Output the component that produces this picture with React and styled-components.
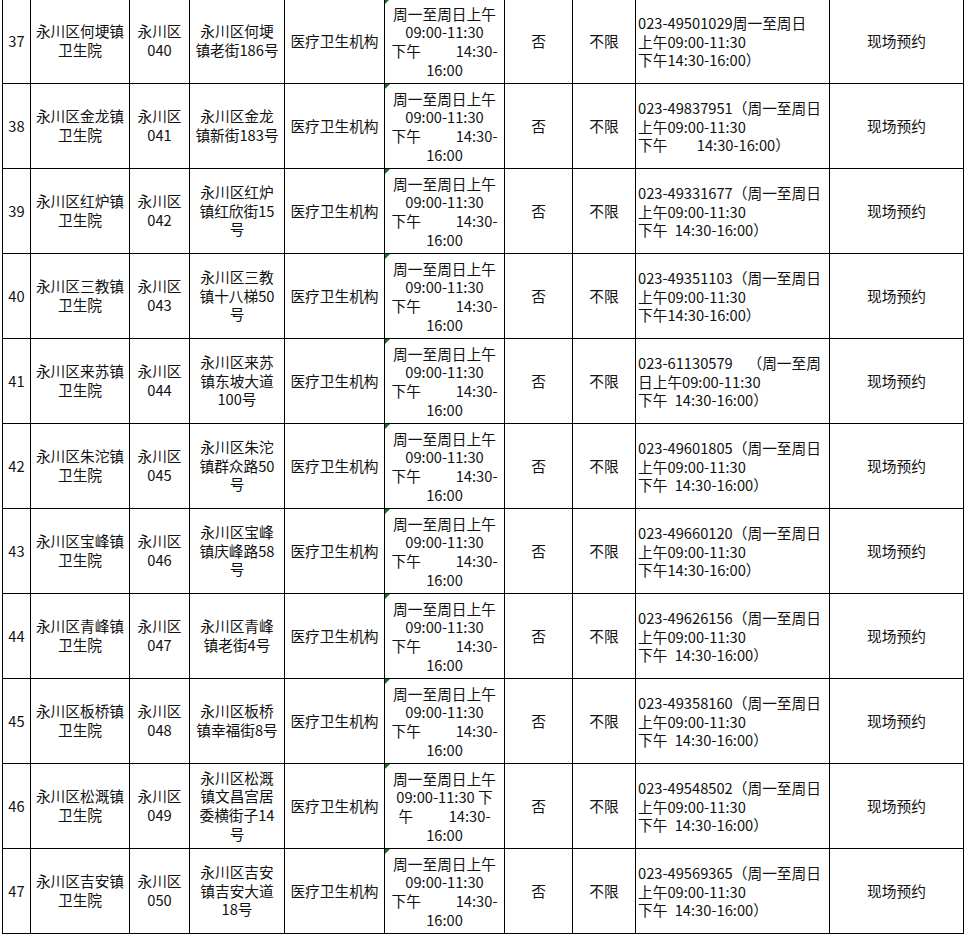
import React from 'react'
import styled, { createGlobalStyle } from 'styled-components';

const GlobalStyle = createGlobalStyle`
  html, body {
    margin: 0;
    padding: 0;
    background: #fff;
  }
  body {
    font-family: "Noto Sans CJK SC", "Liberation Sans", sans-serif;
    color: #111;
  }
`;

const Sheet = styled.div`
  display: grid;
  grid-template-columns: 28px 99px 60px 95px 100px 120px 68px 63px 194px 134px;
  grid-auto-rows: 85px;
  width: fit-content;
  margin: -2px 0 0 2px;
  border-left: 1px solid #000;
  border-top: 1px solid #000;
`;

const Cell = styled.div`
  display: flex;
  flex-direction: column;
  justify-content: center;
  align-items: ${(p) => (p.$left ? 'flex-start' : 'center')};
  text-align: ${(p) => (p.$left ? 'left' : 'center')};
  padding: ${(p) => (p.$left ? '2px 0 0 2px' : '0')};
  border-right: 1px solid #000;
  border-bottom: 1px solid #000;
  font-size: 14.7px;
  line-height: 18.6px;
  white-space: pre;
  overflow: hidden;
`;

const HoursCell = styled(Cell)`
  position: relative;
  padding-top: 2px;

  &::before {
    content: '';
    position: absolute;
    top: 0;
    left: 0;
    border-top: 5px solid #1e6b2c;
    border-right: 5px solid transparent;
  }
`;

const Line = styled.span`
  display: block;
`;

const SplitLine = styled.span`
  display: flex;
  justify-content: space-between;
  width: ${(p) => p.$width}px;
`;

const sp = '\u2002';

const defaultHours = {
  lines: ['周一至周日上午', '09:00-11:30', ['下午', '14:30-'], '16:00'],
  split: 106,
};

const rows = [
  { no: 37, name: '永川区何埂镇\n卫生院', code: '040', addr: '永川区何埂\n镇老街186号',
    phone: '023-49501029周一至周日\n上午09:00-11:30\n下午14:30-16:00）' },
  { no: 38, name: '永川区金龙镇\n卫生院', code: '041', addr: '永川区金龙\n镇新街183号',
    phone: `023-49837951（周一至周日\n上午09:00-11:30\n下午${sp.repeat(4)}14:30-16:00）` },
  { no: 39, name: '永川区红炉镇\n卫生院', code: '042', addr: '永川区红炉\n镇红欣街15\n号',
    phone: `023-49331677（周一至周日\n上午09:00-11:30\n下午${sp}14:30-16:00）` },
  { no: 40, name: '永川区三教镇\n卫生院', code: '043', addr: '永川区三教\n镇十八梯50\n号',
    phone: '023-49351103（周一至周日\n上午09:00-11:30\n下午14:30-16:00）' },
  { no: 41, name: '永川区来苏镇\n卫生院', code: '044', addr: '永川区来苏\n镇东坡大道\n100号',
    phone: `023-61130579${sp}${sp}（周一至周\n日上午09:00-11:30\n下午${sp}14:30-16:00）` },
  { no: 42, name: '永川区朱沱镇\n卫生院', code: '045', addr: '永川区朱沱\n镇群众路50\n号',
    phone: `023-49601805（周一至周日\n上午09:00-11:30\n下午${sp}14:30-16:00）` },
  { no: 43, name: '永川区宝峰镇\n卫生院', code: '046', addr: '永川区宝峰\n镇庆峰路58\n号',
    phone: '023-49660120（周一至周日\n上午09:00-11:30\n下午14:30-16:00）' },
  { no: 44, name: '永川区青峰镇\n卫生院', code: '047', addr: '永川区青峰\n镇老街4号',
    phone: `023-49626156（周一至周日\n上午09:00-11:30\n下午${sp}14:30-16:00）` },
  { no: 45, name: '永川区板桥镇\n卫生院', code: '048', addr: '永川区板桥\n镇幸福街8号',
    phone: `023-49358160（周一至周日\n上午09:00-11:30\n下午${sp}14:30-16:00）` },
  { no: 46, name: '永川区松溉镇\n卫生院', code: '049', addr: '永川区松溉\n镇文昌宫居\n委横街子14\n号',
    hours: { lines: ['周一至周日上午', '09:00-11:30 下', ['午', '14:30-'], '16:00'], split: 92 },
    phone: `023-49548502（周一至周日\n上午09:00-11:30\n下午${sp}14:30-16:00）` },
  { no: 47, name: '永川区吉安镇\n卫生院', code: '050', addr: '永川区吉安\n镇吉安大道\n18号',
    phone: `023-49569365（周一至周日\n上午09:00-11:30\n下午${sp}14:30-16:00）` },
];

function Hours({ data }) {
  return (
    <HoursCell>
      {data.lines.map((ln, i) =>
        Array.isArray(ln) ? (
          <SplitLine key={i} $width={data.split}>
            <span>{ln[0]}</span>
            <span>{ln[1]}</span>
          </SplitLine>
        ) : (
          <Line key={i}>{ln}</Line>
        )
      )}
    </HoursCell>
  );
}

function App() {
  return (
    <>
      <GlobalStyle />
      <Sheet>
        {rows.map((r) => (
          <React.Fragment key={r.no}>
            <Cell>{r.no}</Cell>
            <Cell>{r.name}</Cell>
            <Cell>{`永川区\n${r.code}`}</Cell>
            <Cell>{r.addr}</Cell>
            <Cell>医疗卫生机构</Cell>
            <Hours data={r.hours || defaultHours} />
            <Cell>否</Cell>
            <Cell>不限</Cell>
            <Cell $left>{r.phone}</Cell>
            <Cell>现场预约</Cell>
          </React.Fragment>
        ))}
      </Sheet>
    </>
  );
}

export default App
